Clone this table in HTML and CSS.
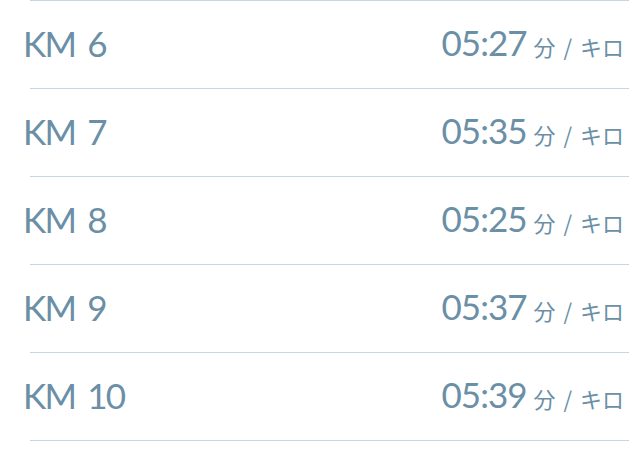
FILE: index.html
```html
<!DOCTYPE html>
<html>
<head>
<meta charset="utf-8">
<link rel="stylesheet" href="styles.css">
</head>
<body>
<ul class="splits">
  <li class="split"><span class="km">KM 6</span><span class="pace"><span class="time">05:27</span><span class="unit">分 / キロ</span></span></li>
  <li class="split"><span class="km">KM 7</span><span class="pace"><span class="time">05:35</span><span class="unit">分 / キロ</span></span></li>
  <li class="split"><span class="km">KM 8</span><span class="pace"><span class="time">05:25</span><span class="unit">分 / キロ</span></span></li>
  <li class="split"><span class="km">KM 9</span><span class="pace"><span class="time">05:37</span><span class="unit">分 / キロ</span></span></li>
  <li class="split"><span class="km">KM 10</span><span class="pace"><span class="time">05:39</span><span class="unit">分 / キロ</span></span></li>
</ul>
</body>
</html>
```
FILE: styles.css
```css
html, body {
  margin: 0;
  padding: 0;
  background: #ffffff;
}
body {
  font-family: Lato, "Noto Sans CJK JP", sans-serif;
  color: #6a8fa6;
}
.splits {
  list-style: none;
  margin: 0;
  padding: 1px 0 0 23px;
  background: linear-gradient(#c8d6e0, #c8d6e0) no-repeat 30px 0 / calc(100% - 30px) 1px;
}
.split {
  display: flex;
  align-items: center;
  justify-content: space-between;
  box-sizing: border-box;
  height: 88px;
  padding: 0 5px 3px 0;
  background: linear-gradient(#c8d6e0, #c8d6e0) no-repeat 7px 100% / calc(100% - 7px) 1px;
}
.km {
  font-size: 35px;
  line-height: 1;
  letter-spacing: -1.8px;
  word-spacing: 5px;
}
.pace {
  display: flex;
  align-items: baseline;
}
.time {
  font-size: 35px;
  line-height: 1;
  letter-spacing: -1px;
}
.unit {
  font-family: "Noto Sans CJK JP", sans-serif;
  font-size: 22px;
  margin-left: 7px;
  word-spacing: 3px;
}
```
